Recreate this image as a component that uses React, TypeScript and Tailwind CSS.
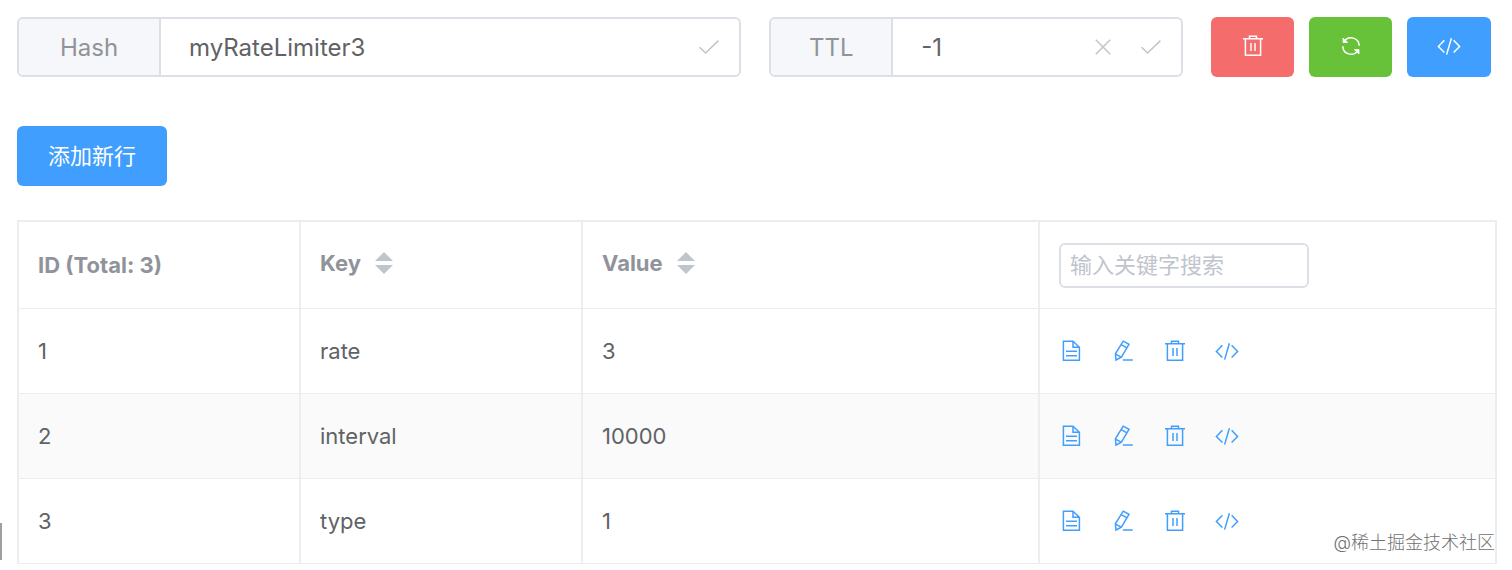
import { useState } from "react";
import type { ReactNode } from "react";

type HashRow = { id: number; key: string; value: string };
type SortField = "key" | "value";

const initialRows: HashRow[] = [
  { id: 1, key: "rate", value: "3" },
  { id: 2, key: "interval", value: "10000" },
  { id: 3, key: "type", value: "1" },
];

export default function App() {
  const [name, setName] = useState("myRateLimiter3");
  const [ttl, setTtl] = useState("-1");
  const [keyword, setKeyword] = useState("");
  const [rows, setRows] = useState(initialRows);

  const visible = rows.filter((r) => r.key.includes(keyword) || r.value.includes(keyword));

  const sortBy = (field: SortField) =>
    setRows([...rows].sort((a, b) => a[field].localeCompare(b[field])));

  return (
    <div className="relative bg-white pt-[17px] pl-[17px] pr-[15px] pb-[6px] font-['Inter','Noto_Sans_CJK_SC',sans-serif] text-[22px] leading-[30px] text-[#606266]">
      {/* Key name, TTL and actions */}
      <header className="grid grid-cols-[7fr_4fr_auto] gap-7 pr-[6px]">
        <Field id="key-name" label="Hash" labelWidth="w-[142px]" value={name} onChange={setName}>
          <IconButton label="Rename"><CheckIcon /></IconButton>
        </Field>
        <Field id="ttl" label="TTL" labelWidth="w-[122px]" value={ttl} onChange={setTtl}>
          <IconButton label="Clear TTL"><CloseIcon /></IconButton>
          <IconButton label="Save TTL"><CheckIcon /></IconButton>
        </Field>
        <div className="flex gap-[15px]">
          <button type="button" aria-label="Delete" className="flex h-[60px] w-[83px] items-center justify-center rounded-md bg-[#f56c6c] pb-0.5 text-white">
            <TrashIcon />
          </button>
          <button type="button" aria-label="Refresh" className="flex h-[60px] w-[83px] items-center justify-center rounded-md bg-[#67c23a] pb-0.5 text-white">
            <RefreshIcon />
          </button>
          <button type="button" aria-label="Dump command" className="flex h-[60px] w-[84px] items-center justify-center rounded-md bg-[#409eff] pb-0.5 text-white">
            <CodeIcon />
          </button>
        </div>
      </header>

      <button type="button" className="mt-[49px] block h-[60px] rounded-md bg-[#409eff] px-[31px] text-white">
        添加新行
      </button>

      <table className="mt-[34px] w-full table-fixed border-separate border-spacing-0 border-t-2 border-l-2 border-[#ebedf0] text-left">
        <colgroup>
          <col className="w-[282px]" />
          <col className="w-[282px]" />
          <col />
          <col />
        </colgroup>
        <thead>
          <tr className="h-[87px] text-[#909399]">
            <th className="border-r-2 border-b border-[#ebedf0] px-[19px] font-bold">ID (Total: {rows.length})</th>
            <SortHeader title="Key" onSort={() => sortBy("key")} />
            <SortHeader title="Value" onSort={() => sortBy("value")} />
            <th className="border-r-2 border-b border-[#ebedf0] px-[19px] font-normal">
              <input
                type="text"
                aria-label="输入关键字搜索"
                placeholder="输入关键字搜索"
                value={keyword}
                onChange={(e) => setKeyword(e.target.value)}
                className="block h-[45px] w-[250px] rounded-md border-2 border-[#dcdfe6] px-[9px] text-[#606266] outline-none placeholder:text-[#c0c4cc]"
              />
            </th>
          </tr>
        </thead>
        <tbody>
          {visible.map((row) => (
            <tr key={row.id} className="h-[85px] even:bg-[#fafafa]">
              <td className="border-r-2 border-b border-[#ebedf0] px-[19px]">{row.id}</td>
              <td className="border-r-2 border-b border-[#ebedf0] px-[19px]">{row.key}</td>
              <td className="border-r-2 border-b border-[#ebedf0] px-[19px]">{row.value}</td>
              <td className="border-r-2 border-b border-[#ebedf0] px-[19px]">
                <div className="flex gap-7 text-[#409eff]">
                  <IconButton label="View"><DocumentIcon /></IconButton>
                  <IconButton label="Edit"><EditIcon /></IconButton>
                  <IconButton label="Delete row"><TrashIcon /></IconButton>
                  <IconButton label="Dump row"><CodeIcon /></IconButton>
                </div>
              </td>
            </tr>
          ))}
        </tbody>
      </table>

      {/* Resize handle of the sidebar */}
      <div className="absolute bottom-[10px] left-0 h-[37px] w-0.5 bg-[#a0a0a0]" />

      <div className="absolute right-[17px] bottom-[13px] text-[18px] leading-[28px] font-light text-[#707070]">
        @稀土掘金技术社区
      </div>
    </div>
  );
}

function Field({ id, label, labelWidth, value, onChange, children }: {
  id: string;
  label: string;
  labelWidth: string;
  value: string;
  onChange: (v: string) => void;
  children: ReactNode;
}) {
  return (
    <div className="flex h-[60px] min-w-0 overflow-hidden rounded-md border-2 border-[#dcdfe6] text-[24px]">
      <label htmlFor={id} className={`${labelWidth} flex shrink-0 items-center justify-center border-r-2 border-[#dcdfe6] bg-[#f5f7fa] pt-0.5 text-[#909399]`}>
        {label}
      </label>
      <input
        id={id}
        type="text"
        value={value}
        onChange={(e) => onChange(e.target.value)}
        className="min-w-0 flex-1 pt-0.5 pl-7 outline-none"
      />
      <div className="flex items-center gap-6 pr-[18px] text-[#c0c4cc]">{children}</div>
    </div>
  );
}

function SortHeader({ title, onSort }: { title: string; onSort: () => void }) {
  return (
    <th className="border-r-2 border-b border-[#ebedf0] px-[19px] pb-1 font-bold">
      <button type="button" onClick={onSort} className="flex items-center gap-[14px]">
        {title}
        <svg width="18" height="22" viewBox="0 0 18 22" fill="#c0c4cc">
          <path d="M9 0 18 9H0z" />
          <path d="M9 22 0 13h18z" />
        </svg>
      </button>
    </th>
  );
}

function IconButton({ label, children }: { label: string; children: ReactNode }) {
  return (
    <button type="button" aria-label={label} className="flex">
      {children}
    </button>
  );
}

function Icon({ children }: { children: ReactNode }) {
  return (
    <svg width="24" height="24" viewBox="0 0 24 24" fill="none" stroke="currentColor" strokeWidth="1.5">
      {children}
    </svg>
  );
}

function CheckIcon() {
  return <Icon><path d="M2.5 12.2 8.6 18 21.4 5.6" /></Icon>;
}

function CloseIcon() {
  return <Icon><path d="M4.8 4.8 19.2 19.2M19.2 4.8 4.8 19.2" /></Icon>;
}

function TrashIcon() {
  return (
    <Icon>
      <path d="M2 4.8h20M8.5 4.8V2.2h7v2.6M4.4 4.8v16.4h15.2V4.8M10 9v8M14 9v8" />
    </Icon>
  );
}

function RefreshIcon() {
  return (
    <Icon>
      <path d="M5.2 7.4A8.2 8.2 0 0 1 20.2 11.8M18.8 16.6A8.2 8.2 0 0 1 3.8 12.2" />
      <path d="M4 4v4.4h4.6zM20 20v-4.4h-4.6z" fill="currentColor" strokeWidth="0.8" />
    </Icon>
  );
}

function CodeIcon() {
  return <Icon><path d="M7.4 6.2 1.4 12.4 7.4 18.6M16.6 6.2 22.6 12.4 16.6 18.6M14.4 4.2 9.6 20.6" /></Icon>;
}

function DocumentIcon() {
  return (
    <Icon>
      <path d="M14 2.2H4.4V21.2h16V8.2zM14 2.2V8.2H20.4M7 12.2h11M7 16.8h11" />
    </Icon>
  );
}

function EditIcon() {
  return (
    <Icon>
      <path d="M12.2 2.2 18 5.4 10.4 18.2 5 21 4.4 14.8zM10.2 5.6 16 8.9M4.5 15.2 10.2 18.2M11.8 21h10" />
    </Icon>
  );
}
